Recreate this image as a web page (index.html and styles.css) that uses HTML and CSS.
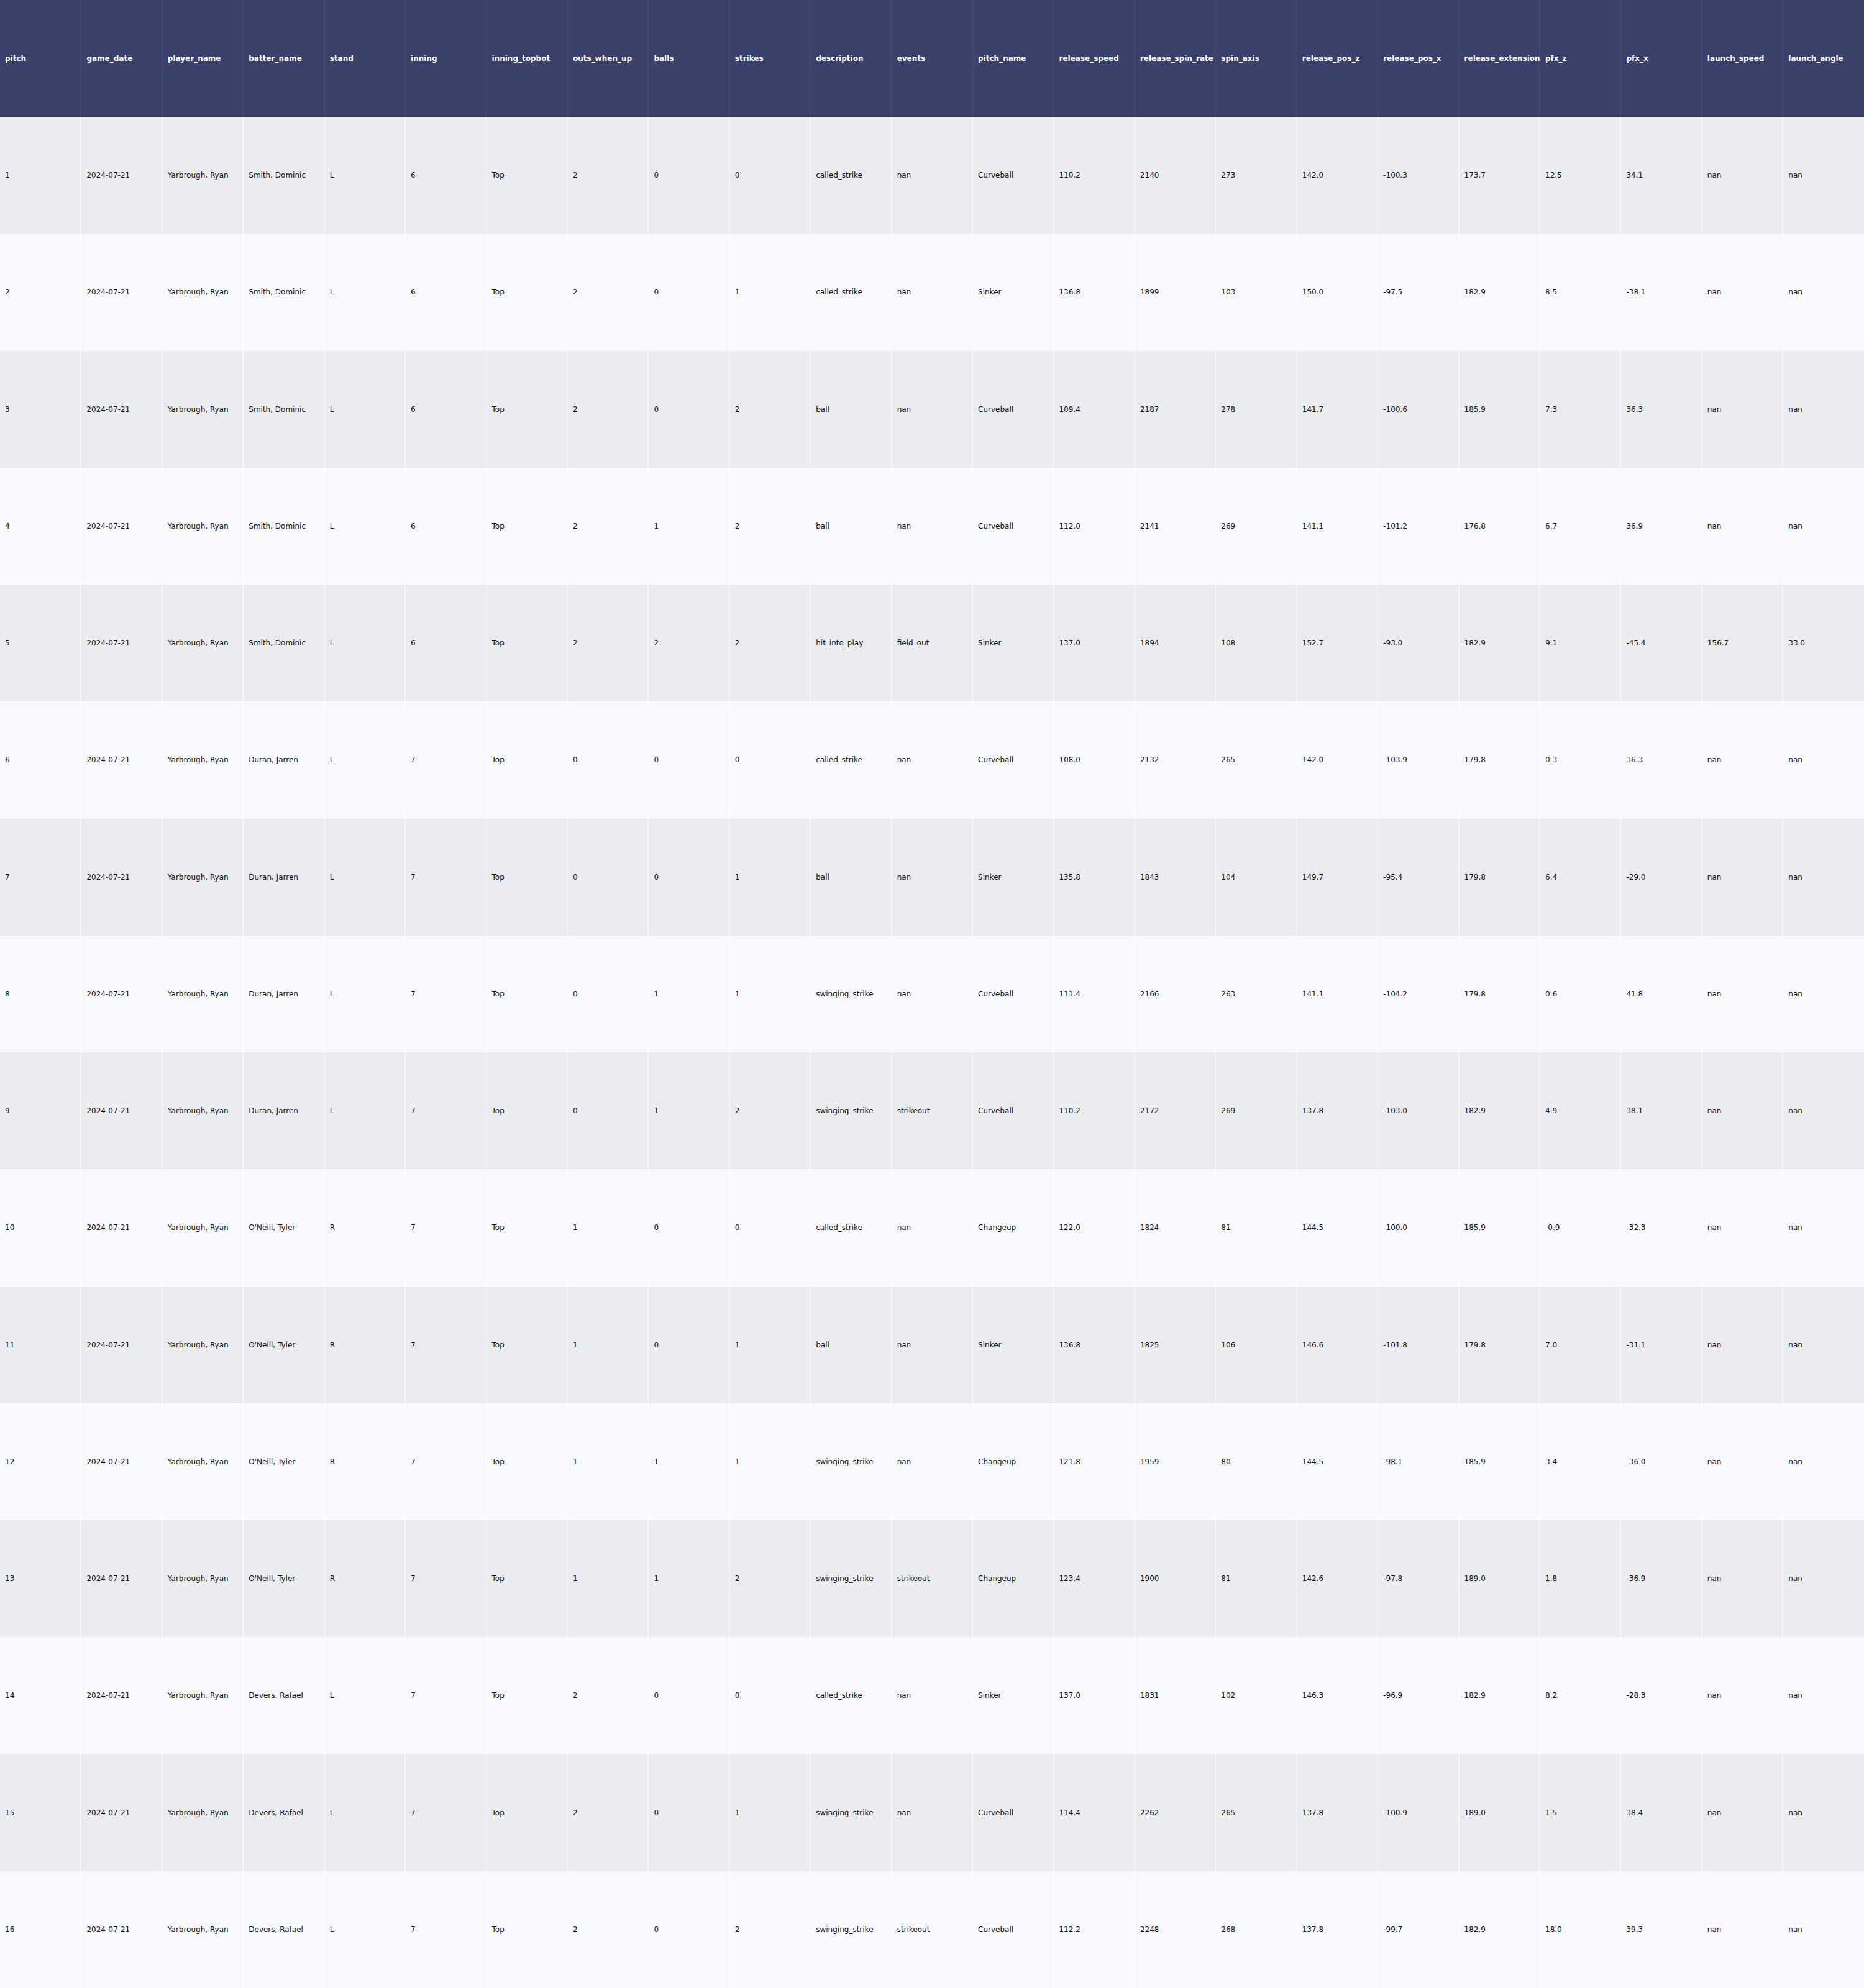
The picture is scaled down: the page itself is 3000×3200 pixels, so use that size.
FILE: index.html
```html
<!DOCTYPE html>
<html>
<head>
<meta charset="utf-8">
<link rel="stylesheet" href="styles.css">
</head>
<body>
<table class="grid">
<thead>
<tr><th>pitch</th><th>game_date</th><th>player_name</th><th>batter_name</th><th>stand</th><th>inning</th><th>inning_topbot</th><th>outs_when_up</th><th>balls</th><th>strikes</th><th>description</th><th>events</th><th>pitch_name</th><th>release_speed</th><th>release_spin_rate</th><th>spin_axis</th><th>release_pos_z</th><th>release_pos_x</th><th>release_extension</th><th>pfx_z</th><th>pfx_x</th><th>launch_speed</th><th>launch_angle</th></tr>
</thead>
<tbody>
<tr><td>1</td><td>2024-07-21</td><td>Yarbrough, Ryan</td><td>Smith, Dominic</td><td>L</td><td>6</td><td>Top</td><td>2</td><td>0</td><td>0</td><td>called_strike</td><td>nan</td><td>Curveball</td><td>110.2</td><td>2140</td><td>273</td><td>142.0</td><td>-100.3</td><td>173.7</td><td>12.5</td><td>34.1</td><td>nan</td><td>nan</td></tr>
<tr><td>2</td><td>2024-07-21</td><td>Yarbrough, Ryan</td><td>Smith, Dominic</td><td>L</td><td>6</td><td>Top</td><td>2</td><td>0</td><td>1</td><td>called_strike</td><td>nan</td><td>Sinker</td><td>136.8</td><td>1899</td><td>103</td><td>150.0</td><td>-97.5</td><td>182.9</td><td>8.5</td><td>-38.1</td><td>nan</td><td>nan</td></tr>
<tr><td>3</td><td>2024-07-21</td><td>Yarbrough, Ryan</td><td>Smith, Dominic</td><td>L</td><td>6</td><td>Top</td><td>2</td><td>0</td><td>2</td><td>ball</td><td>nan</td><td>Curveball</td><td>109.4</td><td>2187</td><td>278</td><td>141.7</td><td>-100.6</td><td>185.9</td><td>7.3</td><td>36.3</td><td>nan</td><td>nan</td></tr>
<tr><td>4</td><td>2024-07-21</td><td>Yarbrough, Ryan</td><td>Smith, Dominic</td><td>L</td><td>6</td><td>Top</td><td>2</td><td>1</td><td>2</td><td>ball</td><td>nan</td><td>Curveball</td><td>112.0</td><td>2141</td><td>269</td><td>141.1</td><td>-101.2</td><td>176.8</td><td>6.7</td><td>36.9</td><td>nan</td><td>nan</td></tr>
<tr><td>5</td><td>2024-07-21</td><td>Yarbrough, Ryan</td><td>Smith, Dominic</td><td>L</td><td>6</td><td>Top</td><td>2</td><td>2</td><td>2</td><td>hit_into_play</td><td>field_out</td><td>Sinker</td><td>137.0</td><td>1894</td><td>108</td><td>152.7</td><td>-93.0</td><td>182.9</td><td>9.1</td><td>-45.4</td><td>156.7</td><td>33.0</td></tr>
<tr><td>6</td><td>2024-07-21</td><td>Yarbrough, Ryan</td><td>Duran, Jarren</td><td>L</td><td>7</td><td>Top</td><td>0</td><td>0</td><td>0</td><td>called_strike</td><td>nan</td><td>Curveball</td><td>108.0</td><td>2132</td><td>265</td><td>142.0</td><td>-103.9</td><td>179.8</td><td>0.3</td><td>36.3</td><td>nan</td><td>nan</td></tr>
<tr><td>7</td><td>2024-07-21</td><td>Yarbrough, Ryan</td><td>Duran, Jarren</td><td>L</td><td>7</td><td>Top</td><td>0</td><td>0</td><td>1</td><td>ball</td><td>nan</td><td>Sinker</td><td>135.8</td><td>1843</td><td>104</td><td>149.7</td><td>-95.4</td><td>179.8</td><td>6.4</td><td>-29.0</td><td>nan</td><td>nan</td></tr>
<tr><td>8</td><td>2024-07-21</td><td>Yarbrough, Ryan</td><td>Duran, Jarren</td><td>L</td><td>7</td><td>Top</td><td>0</td><td>1</td><td>1</td><td>swinging_strike</td><td>nan</td><td>Curveball</td><td>111.4</td><td>2166</td><td>263</td><td>141.1</td><td>-104.2</td><td>179.8</td><td>0.6</td><td>41.8</td><td>nan</td><td>nan</td></tr>
<tr><td>9</td><td>2024-07-21</td><td>Yarbrough, Ryan</td><td>Duran, Jarren</td><td>L</td><td>7</td><td>Top</td><td>0</td><td>1</td><td>2</td><td>swinging_strike</td><td>strikeout</td><td>Curveball</td><td>110.2</td><td>2172</td><td>269</td><td>137.8</td><td>-103.0</td><td>182.9</td><td>4.9</td><td>38.1</td><td>nan</td><td>nan</td></tr>
<tr><td>10</td><td>2024-07-21</td><td>Yarbrough, Ryan</td><td>O'Neill, Tyler</td><td>R</td><td>7</td><td>Top</td><td>1</td><td>0</td><td>0</td><td>called_strike</td><td>nan</td><td>Changeup</td><td>122.0</td><td>1824</td><td>81</td><td>144.5</td><td>-100.0</td><td>185.9</td><td>-0.9</td><td>-32.3</td><td>nan</td><td>nan</td></tr>
<tr><td>11</td><td>2024-07-21</td><td>Yarbrough, Ryan</td><td>O'Neill, Tyler</td><td>R</td><td>7</td><td>Top</td><td>1</td><td>0</td><td>1</td><td>ball</td><td>nan</td><td>Sinker</td><td>136.8</td><td>1825</td><td>106</td><td>146.6</td><td>-101.8</td><td>179.8</td><td>7.0</td><td>-31.1</td><td>nan</td><td>nan</td></tr>
<tr><td>12</td><td>2024-07-21</td><td>Yarbrough, Ryan</td><td>O'Neill, Tyler</td><td>R</td><td>7</td><td>Top</td><td>1</td><td>1</td><td>1</td><td>swinging_strike</td><td>nan</td><td>Changeup</td><td>121.8</td><td>1959</td><td>80</td><td>144.5</td><td>-98.1</td><td>185.9</td><td>3.4</td><td>-36.0</td><td>nan</td><td>nan</td></tr>
<tr><td>13</td><td>2024-07-21</td><td>Yarbrough, Ryan</td><td>O'Neill, Tyler</td><td>R</td><td>7</td><td>Top</td><td>1</td><td>1</td><td>2</td><td>swinging_strike</td><td>strikeout</td><td>Changeup</td><td>123.4</td><td>1900</td><td>81</td><td>142.6</td><td>-97.8</td><td>189.0</td><td>1.8</td><td>-36.9</td><td>nan</td><td>nan</td></tr>
<tr><td>14</td><td>2024-07-21</td><td>Yarbrough, Ryan</td><td>Devers, Rafael</td><td>L</td><td>7</td><td>Top</td><td>2</td><td>0</td><td>0</td><td>called_strike</td><td>nan</td><td>Sinker</td><td>137.0</td><td>1831</td><td>102</td><td>146.3</td><td>-96.9</td><td>182.9</td><td>8.2</td><td>-28.3</td><td>nan</td><td>nan</td></tr>
<tr><td>15</td><td>2024-07-21</td><td>Yarbrough, Ryan</td><td>Devers, Rafael</td><td>L</td><td>7</td><td>Top</td><td>2</td><td>0</td><td>1</td><td>swinging_strike</td><td>nan</td><td>Curveball</td><td>114.4</td><td>2262</td><td>265</td><td>137.8</td><td>-100.9</td><td>189.0</td><td>1.5</td><td>38.4</td><td>nan</td><td>nan</td></tr>
<tr><td>16</td><td>2024-07-21</td><td>Yarbrough, Ryan</td><td>Devers, Rafael</td><td>L</td><td>7</td><td>Top</td><td>2</td><td>0</td><td>2</td><td>swinging_strike</td><td>strikeout</td><td>Curveball</td><td>112.2</td><td>2248</td><td>268</td><td>137.8</td><td>-99.7</td><td>182.9</td><td>18.0</td><td>39.3</td><td>nan</td><td>nan</td></tr>
</tbody>
</table>
</body>
</html>
```
FILE: styles.css
```css
html, body {
  margin: 0;
  padding: 0;
  background: #f8f9fd;
}

.grid {
  width: 3000px;
  height: 3200px;
  table-layout: fixed;
  border-collapse: collapse;
  font-family: "DejaVu Sans", Verdana, sans-serif;
  font-size: 12px;
}

.grid th,
.grid td {
  height: 188px;
  padding: 0 8px;
  text-align: left;
  vertical-align: middle;
  white-space: nowrap;
  overflow: visible;
}

.grid th {
  background: #3b416b;
  color: #ffffff;
  font-weight: bold;
  border-left: 2px solid #41476f;
}

.grid td {
  color: #111111;
  border-left: 2px solid rgba(255, 255, 255, 0.55);
}

.grid th:first-child,
.grid td:first-child {
  border-left: none;
}

.grid tbody tr:nth-child(odd) td {
  background: #ebecf0;
}

.grid tbody tr:nth-child(even) td {
  background: #f8f9fd;
}
```
